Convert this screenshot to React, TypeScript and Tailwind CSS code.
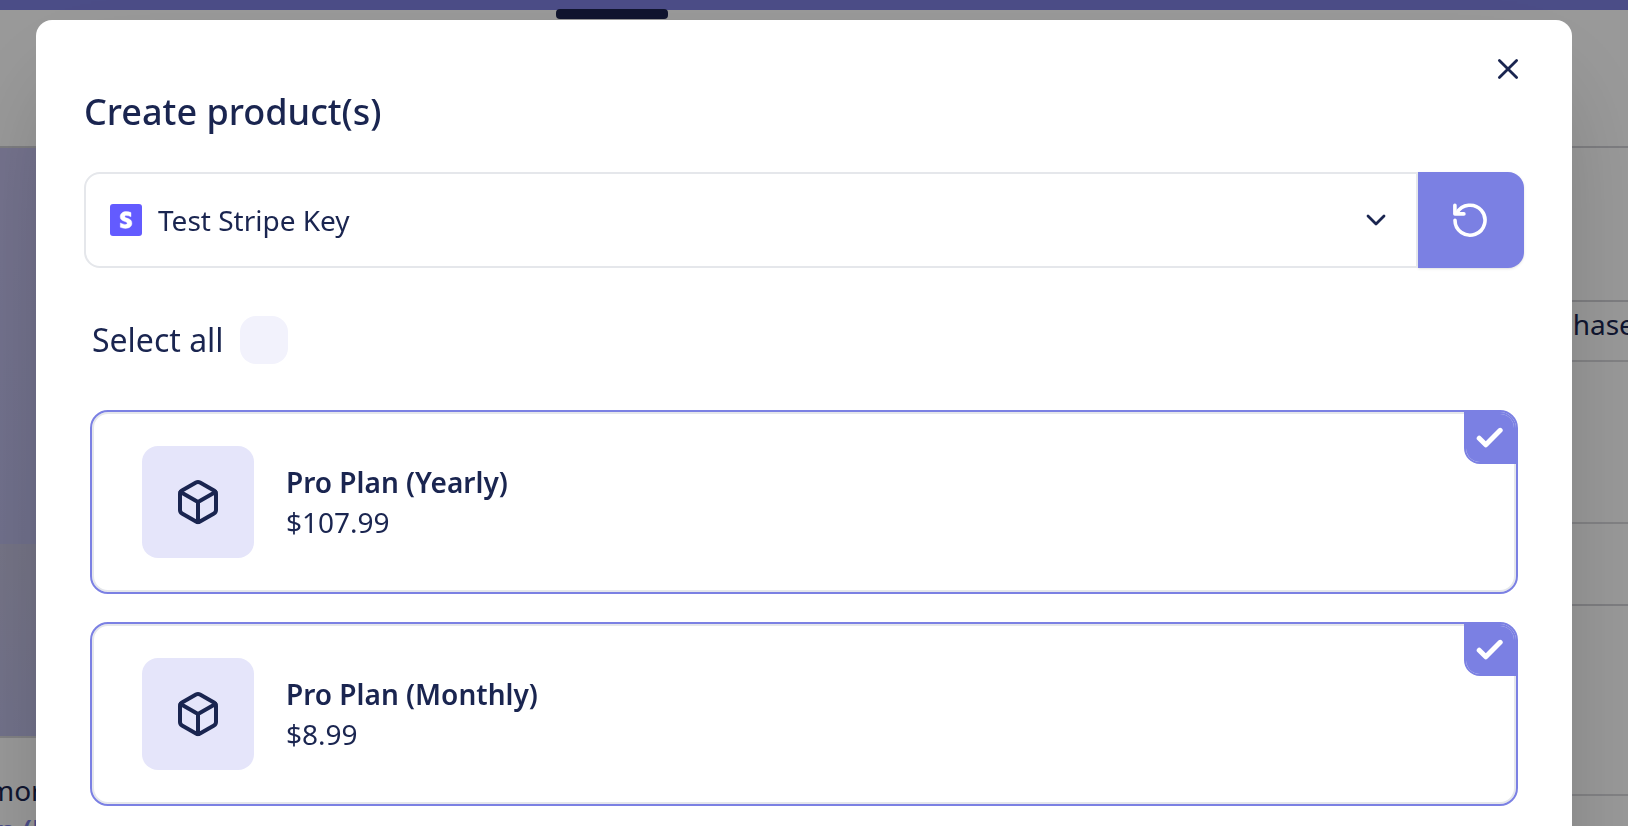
import { useState } from "react";

const initialProducts = [
  { id: "yearly", name: "Pro Plan (Yearly)", price: "$107.99", selected: true },
  { id: "monthly", name: "Pro Plan (Monthly)", price: "$8.99", selected: true },
];

function CloseIcon() {
  return (
    <svg viewBox="0 0 40 40" className="size-10" fill="none" stroke="currentColor" strokeWidth="2.8" strokeLinecap="round" aria-hidden="true">
      <path d="M11.400 12.400l17.200 17.200M28.600 12.400L11.400 29.600" />
    </svg>
  );
}

function ChevronIcon() {
  return (
    <svg viewBox="0 0 20 12" className="h-3 w-5" fill="none" stroke="currentColor" strokeWidth="2.8" strokeLinecap="round" strokeLinejoin="round" aria-hidden="true">
      <path d="M2 2l8 8 8-8" />
    </svg>
  );
}

function RefreshIcon() {
  return (
    <svg viewBox="0 0 36 36" className="size-9" fill="none" stroke="currentColor" strokeWidth="3.6" strokeLinecap="round" strokeLinejoin="round" aria-hidden="true">
      <path d="M1.900 3.200v8.700h9" />
      <path d="M2 18.200A15 15 0 1 0 3.900 10.900" />
    </svg>
  );
}

function CheckIcon() {
  return (
    <svg viewBox="0 0 28 28" className="size-7" fill="none" stroke="currentColor" strokeWidth="5" strokeLinecap="round" strokeLinejoin="round" aria-hidden="true">
      <path d="M3.200 14.200l6.600 6.600L24.200 6.300" />
    </svg>
  );
}

function StripeIcon() {
  return (
    <svg viewBox="0 0 32 32" className="size-8" aria-hidden="true">
      <rect width="32" height="32" rx="3" fill="#635bff" />
      <path
        fill="#fff"
        stroke="#fff"
        strokeWidth="0.4"
        d="M14.800 12.600c0-.7.6-1 1.600-1 1.400 0 3.200.4 4.600 1.200V8.500C19.500 7.900 18 7.600 16.400 7.600c-3.700 0-6.200 2-6.200 5.200 0 5.100 7 4.300 7 6.500 0 .9-.7 1.100-1.800 1.100-1.500 0-3.500-.6-5.100-1.500v4.400c1.700.7 3.500 1.100 5.100 1.100 3.800 0 6.500-1.900 6.500-5.200 0-5.500-7.100-4.500-7.100-6.600z"
      />
    </svg>
  );
}

function CubeIcon() {
  return (
    <svg viewBox="0 0 24 24" className="size-12" fill="none" stroke="currentColor" strokeWidth="2" strokeLinecap="round" strokeLinejoin="round" aria-hidden="true">
      <path d="M21 16V8a2 2 0 0 0-1-1.730l-7-4a2 2 0 0 0-2 0l-7 4A2 2 0 0 0 3 8v8a2 2 0 0 0 1 1.730l7 4a2 2 0 0 0 2 0l7-4A2 2 0 0 0 21 16z" />
      <path d="M3.270 6.960 12 12.010l8.730-5.050M12 22.080V12" />
    </svg>
  );
}

function PageBehind() {
  return (
    <div className="flex h-screen flex-col overflow-hidden bg-white text-[28px] leading-10" aria-hidden="true">
      <div className="relative h-2.5 shrink-0 bg-[#7e80e1]">
        <div className="absolute top-[9px] left-[556px] h-2.5 w-28 rounded bg-[#1c234e]" />
      </div>
      <div className="h-[138px] shrink-0 border-b-2 border-[#d1d1d6]" />
      <div className="flex grow justify-between">
        <div className="w-40">
          <div className="h-[396px] bg-linear-to-b from-[#c2bfeb] to-[#bbbbe9]" />
          <div className="h-[194px] border-b-2 border-[#d8d8dc] bg-linear-to-b from-[#c3c1df] to-[#bdbde6]" />
          <div className="-ml-3 pt-8 whitespace-nowrap">
            <p>more</p>
            <p className="-ml-8 font-semibold text-[#7b80e3]">Plan (Monthly)</p>
          </div>
        </div>
        <div className="w-[114px]">
          <div className="h-[154px] border-b-2 border-[#d1d1d6]" />
          <div className="h-15 border-b-2 border-[#d8d8dc] pt-0.5 whitespace-nowrap">Purchase</div>
          <div className="h-[162px] border-b-2 border-[#d8d8dc]" />
          <div className="h-[82px] border-b-2 border-[#d1d1d6]" />
          <div className="h-[190px] border-b-2 border-[#d8d8dc]" />
        </div>
      </div>
    </div>
  );
}

export default function App() {
  const [products, setProducts] = useState(initialProducts);
  const [all, setAll] = useState(false);

  const toggle = (id: string) =>
    setProducts(products.map((p) => (p.id === id ? { ...p, selected: !p.selected } : p)));

  const toggleAll = () => {
    setAll(!all);
    setProducts(products.map((p) => ({ ...p, selected: !all })));
  };

  return (
    <div className="font-['Noto_Sans',sans-serif] text-[#1a2550]">
      <PageBehind />
      <div className="fixed inset-0 overflow-hidden bg-black/40 pt-5 pr-14 pl-9">
        <section
          role="dialog"
          aria-labelledby="dialog-title"
          className="min-h-[110vh] rounded-2xl bg-white px-12 pt-7 pb-12 shadow-[0_50px_100px_-24px_rgba(0,0,0,0.25)]"
        >
          <div className="flex h-10 justify-end">
            <button type="button" aria-label="Close" className="-mr-1 size-10">
              <CloseIcon />
            </button>
          </div>
          <h1 id="dialog-title" className="text-4xl leading-12 font-medium">Create product(s)</h1>

          <div className="mt-9 flex h-24">
            <div className="relative grow">
              <label htmlFor="stripe-key" className="sr-only">Stripe key</label>
              <select
                id="stripe-key"
                className="size-full appearance-none rounded-l-2xl border-2 border-[#e5e7eb] bg-white pr-20 pl-18 text-[28px]"
              >
                <option>Test Stripe Key</option>
              </select>
              <span className="pointer-events-none absolute inset-y-0 left-[26px] flex items-center">
                <StripeIcon />
              </span>
              <span className="pointer-events-none absolute inset-y-0 right-8 flex items-center">
                <ChevronIcon />
              </span>
            </div>
            <button
              type="button"
              aria-label="Refresh"
              className="flex w-[106px] items-center justify-center rounded-r-2xl bg-[#7b80e3] text-white shadow-sm"
            >
              <RefreshIcon />
            </button>
          </div>

          <div className="mt-12 flex items-center gap-4 pl-2">
            <label htmlFor="select-all" className="text-[32px] leading-12">Select all</label>
            <input
              id="select-all"
              type="checkbox"
              checked={all}
              onChange={toggleAll}
              className="size-12 appearance-none rounded-2xl bg-[#f2f2fc] checked:bg-[#7b80e3]"
            />
          </div>

          <ul className="mt-[46px] flex flex-col gap-7 px-1.5">
            {products.map((p) => (
              <li key={p.id}>
                <label className="relative flex items-center gap-8 rounded-[18px] border-2 border-[#e5e7eb] px-[50px] py-[34px] inset-shadow-[0_0_0_2px_#e5e7eb] has-checked:border-[#7b80e3]">
                  <input
                    type="checkbox"
                    checked={p.selected}
                    onChange={() => toggle(p.id)}
                    className="sr-only"
                  />
                  <span className="flex size-28 items-center justify-center rounded-2xl bg-[#e5e5fa]">
                    <CubeIcon />
                  </span>
                  <span className="flex flex-col text-[28px] leading-10">
                    <span className="font-semibold">{p.name}</span>
                    <span>{p.price}</span>
                  </span>
                  {p.selected && (
                    <span className="absolute top-0 right-0 flex size-[52px] items-center justify-center rounded-tr-2xl rounded-bl-2xl border-2 border-[#7b80e3] bg-[#7b80e3] bg-clip-padding text-white">
                      <CheckIcon />
                    </span>
                  )}
                </label>
              </li>
            ))}
          </ul>
        </section>
      </div>
    </div>
  );
}
